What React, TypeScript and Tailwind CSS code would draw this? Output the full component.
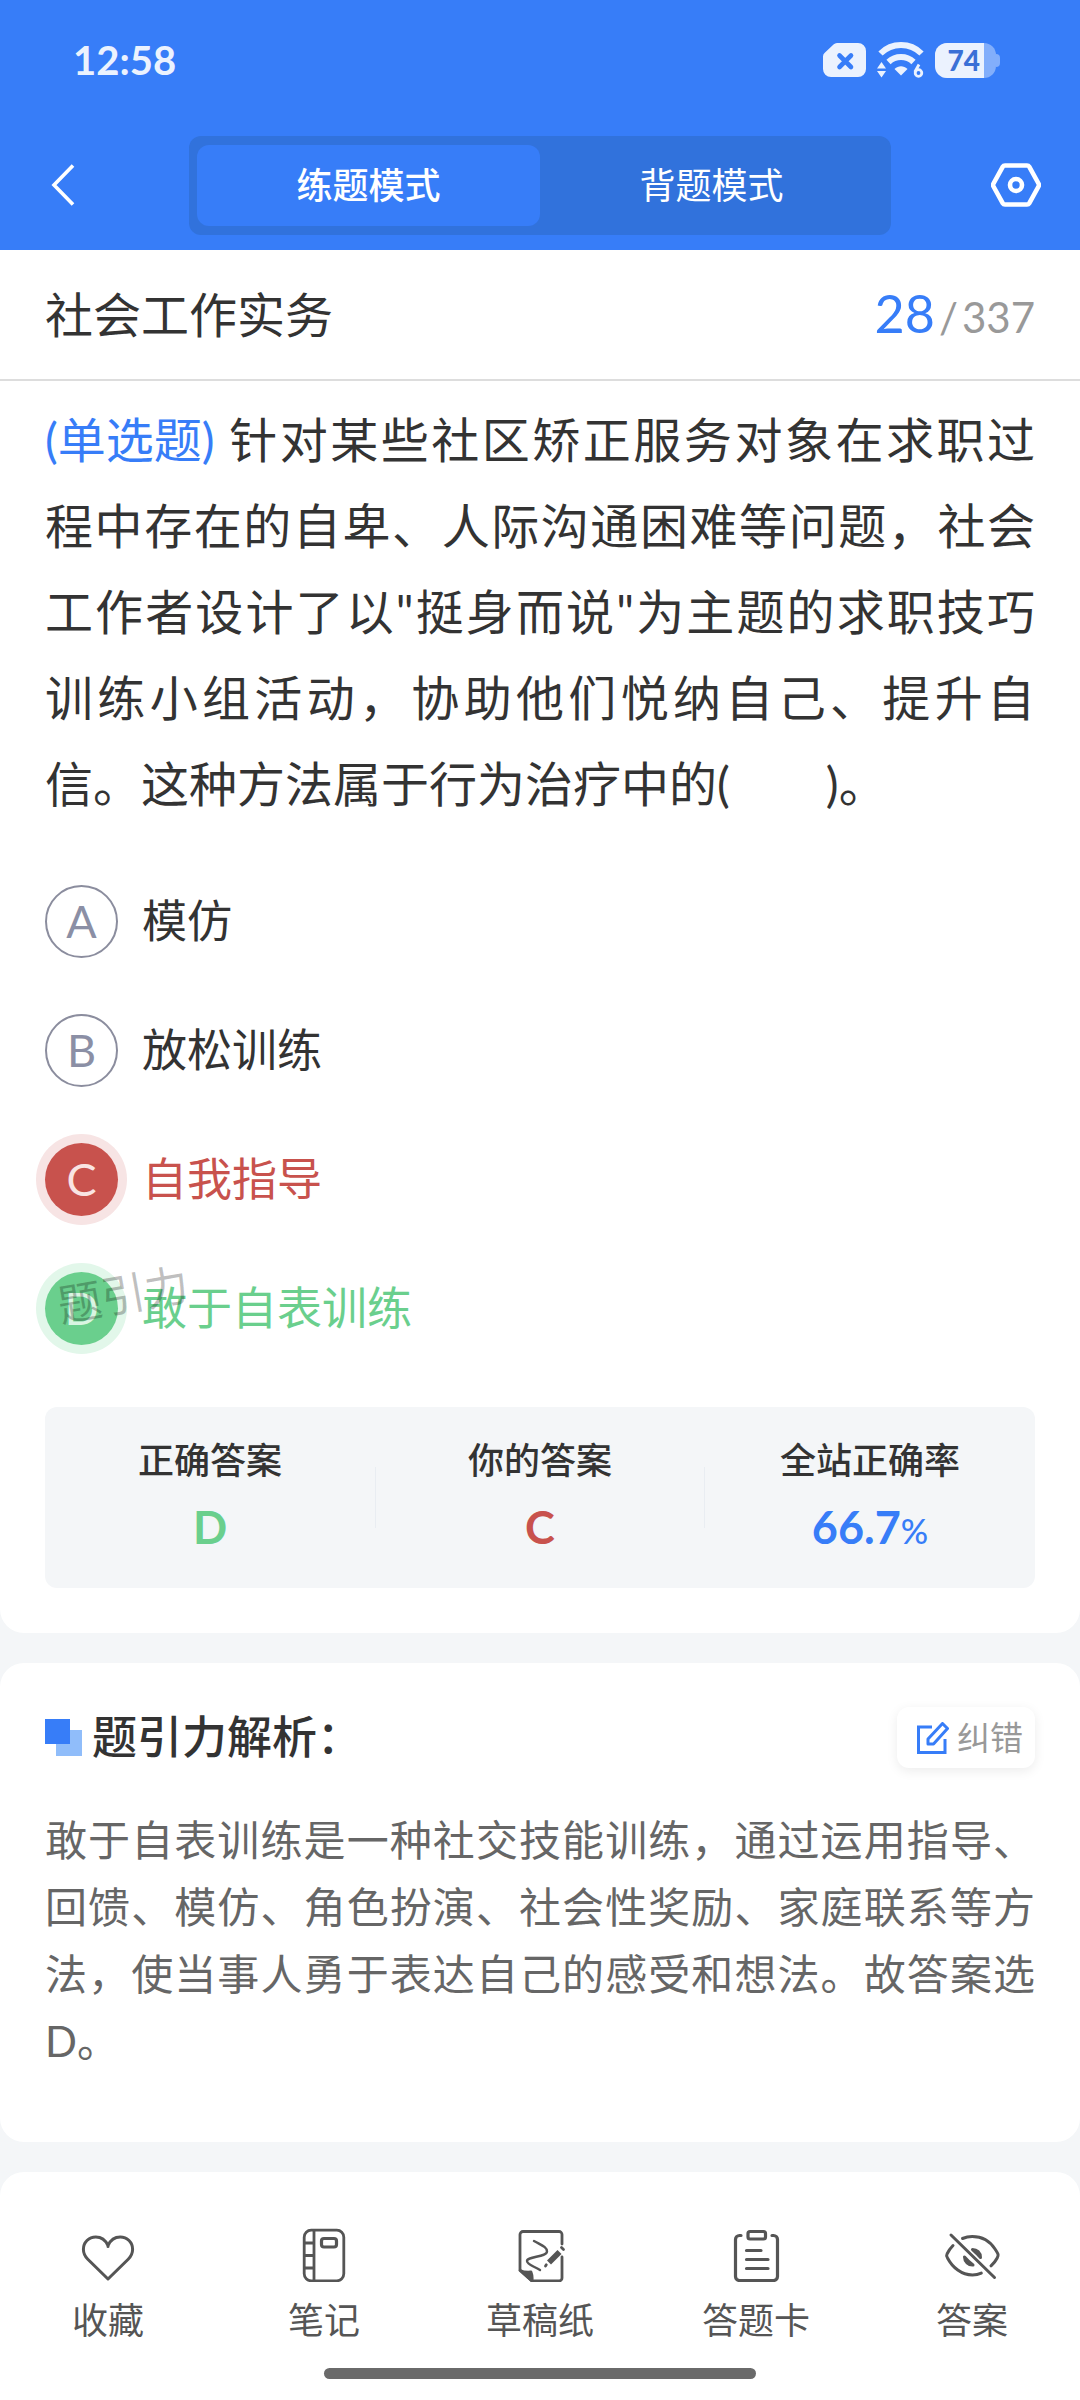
import React, { useState } from 'react';

type OptionState = 'idle' | 'wrong' | 'right';

const options: { key: string; text: string; state: OptionState }[] = [
  { key: 'A', text: '模仿', state: 'idle' },
  { key: 'B', text: '放松训练', state: 'idle' },
  { key: 'C', text: '自我指导', state: 'wrong' },
  { key: 'D', text: '敢于自表训练', state: 'right' },
];

const badgeStyles: Record<OptionState, string> = {
  idle: 'border-2 border-[#8b8d9e] text-[#8b8fa5]',
  wrong: 'bg-[#c8524d] text-[#f9e4e3] ring-9 ring-[#f7e4e4]',
  right: 'bg-[#6acf8d] text-[#d9f5e2] ring-9 ring-[#e2f7ea]',
};

const textStyles: Record<OptionState, string> = {
  idle: 'text-[#333333]',
  wrong: 'text-[#c8524d]',
  right: 'text-[#6acf8d]',
};

const HeartIcon = () => (
  <svg className="h-14 w-14" viewBox="0 0 56 56" fill="none" stroke="currentColor" strokeWidth="3" strokeLinecap="round" strokeLinejoin="round">
    <path d="M28 20.500V19.500c-2.600-5.600-7-8.500-12.200-8.500C8.800 11 3.400 16.400 3.400 23.200c0 4 1.700 7.300 4.400 10L28 53l20.200-19.800c2.700-2.700 4.400-6 4.400-10C52.600 16.400 47.200 11 40.200 11 35 11 30.600 13.900 28 19.500z" />
  </svg>
);

const NotebookIcon = () => (
  <svg className="h-14 w-14" viewBox="0 0 56 56" fill="none" stroke="currentColor" strokeWidth="2.800">
    <rect x="8.200" y="4.200" width="39.600" height="50.600" rx="7" />
    <path d="M18 4.200v50.600M8.200 17H18M8.200 29.500H18M8.200 42H18" />
    <rect x="25.500" y="12.500" width="15" height="8.500" rx="2.500" strokeWidth="3.200" />
  </svg>
);

const DraftIcon = () => (
  <svg className="h-14 w-14" viewBox="0 0 56 56" fill="none" stroke="currentColor" strokeWidth="2.800" strokeLinecap="round" strokeLinejoin="round">
    <path d="M50 18V8.500a3 3 0 0 0-3-3H11a3 3 0 0 0-3 3V44l12 11h27a3 3 0 0 0 3-3V31" />
    <path d="M8 44.500L20 55c.5-3.800 0-6.500-1-9-3.800.4-7.500.1-11-1.500z" fill="currentColor" />
    <path d="M22 15c8 4.500 13 6 13 10.500 0 5.500-20 5-20 9.500 0 3.500 6.500 5 13 9" strokeWidth="2.400" />
    <path d="M37 36.500l10.500-10.500" strokeWidth="5.600" strokeLinecap="butt" />
    <path d="M49.500 21.500l2 2M33.500 40l.8-1.200" strokeWidth="2.800" />
  </svg>
);

const CardIcon = () => (
  <svg className="h-14 w-14" viewBox="0 0 56 56" fill="none" stroke="currentColor" strokeWidth="3.200" strokeLinecap="round" strokeLinejoin="round">
    <path d="M13 9.500h-1.500a4 4 0 0 0-4 4v37a4 4 0 0 0 4 4h34a4 4 0 0 0 4-4v-37a4 4 0 0 0-4-4H44" />
    <rect x="20" y="5.500" width="17.500" height="7.500" rx="2" />
    <path d="M18.500 24.500H33M18.500 33.500h21.500M18.500 42.500h21.500" />
  </svg>
);

const EyeOffIcon = () => (
  <svg className="h-14 w-14" viewBox="0 0 56 56" fill="none" stroke="currentColor" strokeWidth="3" strokeLinecap="round" strokeLinejoin="round">
    <path d="M7 9l43.500 42.500" />
    <path d="M18.500 12.500c3-1.300 6.200-2 9.700-2 10.300 0 18.300 5.500 22.800 12.500 2.800 4.500 4.200 5.500 2.200 9-1.500 3-3.700 5.500-6.200 7.800" />
    <path d="M9 19.500c-2.500 2.500-4.500 5.500-6 8.500-.8 1.500-.5 2.500.5 4C8.500 41.500 17.500 49 28.500 49c3.500 0 6.300-.7 8.800-1.900" />
    <path d="M28.500 23.500c4.500 0 8 3 8 8-1.500-1.800-5.500-5.800-8-8z" fill="currentColor" />
    <path d="M20.500 31a8 8 0 0 0 8.500 8c-3-2.200-6-5-8.500-8z" fill="currentColor" />
  </svg>
);

const navItems = [
  { label: '收藏', Icon: HeartIcon },
  { label: '笔记', Icon: NotebookIcon },
  { label: '草稿纸', Icon: DraftIcon },
  { label: '答题卡', Icon: CardIcon },
  { label: '答案', Icon: EyeOffIcon },
];

const StatusBar = () => (
  <div className="flex h-[120px] items-center justify-between pl-[73px] pr-20">
    <span className="text-[40px] font-bold leading-none text-[#ebf2fe]">12:58</span>
    <div className="flex items-center gap-[11px]">
      <svg className="h-[34px] w-[43px]" viewBox="0 0 43 34">
        <path d="M14 0h21a8 8 0 0 1 8 8v18a8 8 0 0 1-8 8H8a8 8 0 0 1-8-8V13.500a5 5 0 0 1 1.500-3.500l9-8.500A5 5 0 0 1 14 0z" fill="#ebf2fe" />
        <path d="M16.500 12.500l11.500 11.500M28 12.500L16.500 24" stroke="#377df8" strokeWidth="4.600" strokeLinecap="round" />
      </svg>
      <svg className="h-[36px] w-[47px]" viewBox="0 0 47 36">
        <path d="M3.500 11.500a29 29 0 0 1 41 0" fill="none" stroke="#ebf2fe" strokeWidth="6" />
        <path d="M11.500 20a18 18 0 0 1 25 0" fill="none" stroke="#ebf2fe" strokeWidth="6" />
        <path d="M17.500 27c4-3.800 9-3.800 13 0L24 33.500z" fill="#ebf2fe" />
        <path d="M4.500 20l4.500 6.500H0zM4.500 35.500L0 29h9z" fill="#ebf2fe" />
        <circle cx="41.500" cy="31" r="3.300" fill="none" stroke="#ebf2fe" strokeWidth="2.800" />
        <path d="M37.800 30l4.200-7.500" stroke="#ebf2fe" strokeWidth="2.800" />
      </svg>
      <div className="flex items-center">
        <div className="flex h-[35px] w-[61px] rounded-xl bg-[#82aefb]">
          <span className="flex w-[49px] items-center justify-end rounded-l-xl bg-[#ebf2fe] pr-1 text-[28px] font-black leading-none text-[#3a70d6]">74</span>
        </div>
        <div className="h-[13px] w-1 rounded-r bg-[#82aefb]" />
      </div>
    </div>
  </div>
);

const ModeSwitch: React.FC = () => {
  const [mode, setMode] = useState('练题模式');

  return (
    <div className="flex h-[99px] rounded-xl bg-[#3172dc] px-2 py-[9px]">
      {['练题模式', '背题模式'].map((name) => (
        <button
          key={name}
          type="button"
          onClick={() => setMode(name)}
          className={`flex-1 rounded-xl text-[36px] leading-none text-white ${mode === name ? 'bg-[#377df8] font-medium' : ''}`}
        >
          {name}
        </button>
      ))}
    </div>
  );
};

const App: React.FC = () => {
  return (
    <div
      lang="zh-CN"
      className="flex min-h-screen flex-col bg-[#f4f6f8] font-['Lato','Noto_Sans_CJK_SC',sans-serif] text-[#333333]"
    >
      {/* Header */}
      <header className="bg-[#377df8]">
        <StatusBar />
        <div className="grid h-[130px] grid-cols-[1fr_65%_1fr] items-center">
          <button type="button" aria-label="返回" className="pl-[51px]">
            <svg className="h-[42px] w-6" viewBox="0 0 24 42" fill="none" stroke="white" strokeWidth="3.600">
              <path d="M22 1.500L3 21l19 19.500" />
            </svg>
          </button>
          <ModeSwitch />
          <button type="button" aria-label="设置" className="flex justify-end pr-[39px]">
            <svg className="h-[44px] w-[50px]" viewBox="0 0 50 44" fill="none" stroke="white" strokeWidth="4.600" strokeLinejoin="round">
              <path d="M14 2.500h22q1.500 0 2.200 1.200L47.500 20.500q.8 1.500 0 3L38.200 40.300q-.7 1.200-2.200 1.200H14q-1.500 0-2.200-1.200L2.500 23.500q-.8-1.500 0-3L11.800 3.700Q12.500 2.500 14 2.500z" />
              <circle cx="25" cy="22" r="6" />
            </svg>
          </button>
        </div>
      </header>

      <main>
        {/* Question */}
        <section className="rounded-b-3xl bg-white pb-[45px]">
          <div className="flex h-[131px] items-center justify-between border-b-2 border-[#dddddd] px-[45px]">
            <h1 className="text-[48px] leading-none">社会工作实务</h1>
            <p className="flex items-baseline gap-1 pb-1 text-[42px] leading-none text-[#999999]">
              <span className="text-[52px] text-[#377df8]">28</span>
              <span>/</span>
              <span>337</span>
            </p>
          </div>

          <div className="px-[45px]">
            <p className="pt-4 text-justify text-[48px] leading-[86px] [text-spacing-trim:space-all]">
              <span className="mr-3 inline-block text-[#377df8]">(单选题)</span>
              针对某些社区矫正服务对象在求职过程中存在的自卑、人际沟通困难等问题，社会工作者设计了以"挺身而说"为主题的求职技巧训练小组活动，协助他们悦纳自己、提升自信。这种方法属于行为治疗中的(　　)。
            </p>

            <div className="mt-[58px] flex flex-col gap-14">
              {options.map((option) => (
                <button key={option.key} type="button" className="relative flex items-center gap-6 text-left text-[45px] leading-none">
                  <span className={`flex h-[73px] w-[73px] items-center justify-center rounded-full ${badgeStyles[option.state]}`}>
                    {option.key}
                  </span>
                  <span className={textStyles[option.state]}>{option.text}</span>
                  {option.state === 'right' && (
                    <span className="absolute top-0 left-3 -rotate-10 text-[44px] text-black/25">题引力</span>
                  )}
                </button>
              ))}
            </div>

            <div className="mt-[62px] grid grid-cols-3 rounded-xl bg-[#f4f6f8] py-[30px] text-center font-medium">
              <div className="flex flex-col">
                <span className="text-[36px] leading-[46px]">正确答案</span>
                <span className="mt-3.5 text-[45px] font-bold leading-[61px] text-[#6acf8d]">D</span>
              </div>
              <div className="relative flex flex-col">
                <span className="absolute inset-y-[30px] left-0 w-px bg-[#e9edf2]" />
                <span className="absolute inset-y-[30px] right-0 w-px bg-[#e9edf2]" />
                <span className="text-[36px] leading-[46px]">你的答案</span>
                <span className="mt-3.5 text-[45px] font-bold leading-[61px] text-[#c8524d]">C</span>
              </div>
              <div className="flex flex-col">
                <span className="text-[36px] leading-[46px]">全站正确率</span>
                <span className="mt-3.5 text-[45px] font-bold leading-[61px] text-[#377df8]">
                  66.7<span className="text-[34px] font-medium leading-none">%</span>
                </span>
              </div>
            </div>
          </div>
        </section>

        {/* Explanation */}
        <section className="mt-[30px] rounded-3xl bg-white px-[45px] pb-[67px] pt-11">
          <div className="flex items-center justify-between">
            <h2 className="flex items-center gap-2.5 text-[45px] font-medium leading-none">
              <svg className="h-[37px] w-[37px]" viewBox="0 0 37 37">
                <rect x="11" y="11" width="26" height="26" fill="#90bdfa" />
                <rect width="25" height="25" fill="#377df8" />
              </svg>
              题引力解析：
            </h2>
            <button type="button" className="flex h-[61px] items-center gap-2 rounded-xl bg-white pl-5 pr-3 text-[33px] leading-none text-[#999999] shadow-[0_3px_12px_rgba(0,0,0,0.08)]">
              <svg className="h-8 w-8" viewBox="0 0 32 32" fill="none" stroke="#377df8" strokeWidth="3">
                <path d="M15 5H1.500v25.500H28V17" />
                <path d="M25.500 1.500l5 5L16.500 22h-5.500v-5z" strokeLinejoin="round" />
              </svg>
              纠错
            </button>
          </div>
          <p className="mt-[39px] text-justify text-[42px] leading-[67px] text-[#666666] [text-spacing-trim:space-all]">
            敢于自表训练是一种社交技能训练，通过运用指导、回馈、模仿、角色扮演、社会性奖励、家庭联系等方法，使当事人勇于表达自己的感受和想法。故答案选D。
          </p>
        </section>
      </main>

      {/* Bottom bar */}
      <nav className="mt-[30px] flex-1 rounded-t-3xl bg-white pb-[21px] pt-[54px] text-[#555555]">
        <div className="grid grid-cols-5">
          {navItems.map(({ label, Icon }) => (
            <button key={label} type="button" className="flex flex-col items-center gap-3 text-[36px] leading-[52px]">
              <Icon />
              {label}
            </button>
          ))}
        </div>
        <div className="mx-auto mt-[22px] h-[11px] w-[40%] rounded-full bg-[#6a6a6a]" />
      </nav>
    </div>
  );
};

export default App;
